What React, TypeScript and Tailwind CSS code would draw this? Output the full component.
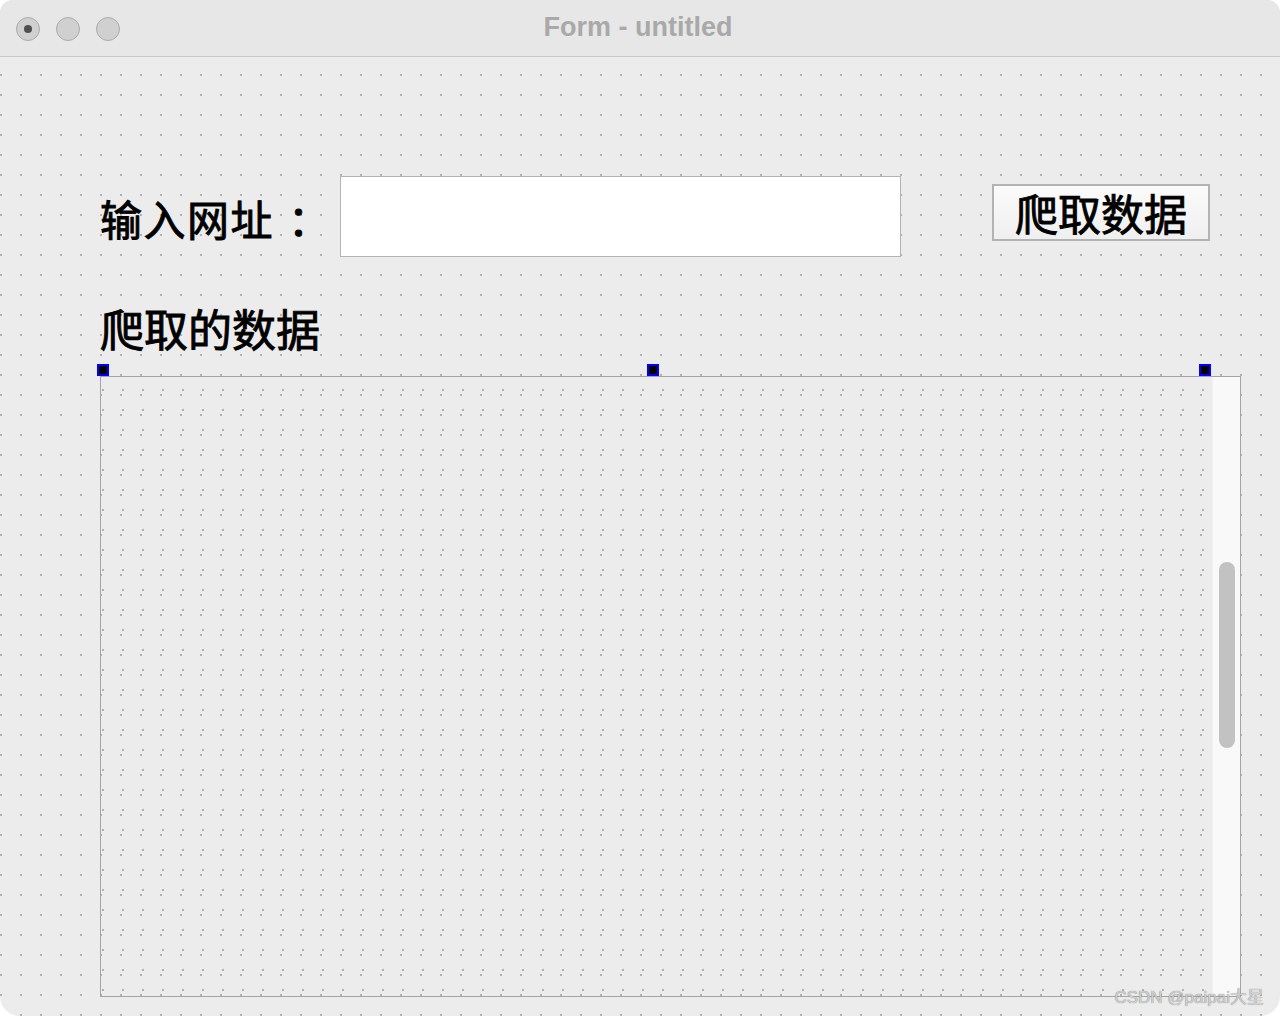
const cjk = "font-['Noto_Sans_CJK_SC','Noto_Sans_CJK_TC',sans-serif] font-normal [-webkit-text-stroke:0.9px_black]";

function Handle() {
  return <div className="h-[12px] w-[12px] border-2 border-[#0000ff] bg-black" />;
}

export default function App() {
  return (
    <div className="h-[1016px] w-[1280px] bg-white">
      <div className="relative flex h-[1016px] w-[1280px] flex-col overflow-hidden rounded-t-[13px] rounded-b-[20px] bg-[#ececec]">
        {/* Title bar */}
        <div className="relative flex h-[57px] shrink-0 items-center border-b border-[#c9c9c9] bg-[#e7e7e7]">
          <div className="flex items-center gap-[16px] pl-[16px] pt-[1px]">
            <div className="flex h-[24px] w-[24px] items-center justify-center rounded-full border border-[#ababab] bg-[#d0d0d0]">
              <div className="h-[8px] w-[8px] rounded-full bg-[#4f4f4f]" />
            </div>
            <div className="h-[24px] w-[24px] rounded-full border border-[#ababab] bg-[#d0d0d0]" />
            <div className="h-[24px] w-[24px] rounded-full border border-[#ababab] bg-[#d0d0d0]" />
          </div>
          <div className="absolute inset-x-0 top-[9px] pr-[4px] text-center font-['Liberation_Sans',Arial,sans-serif] text-[27px] font-bold leading-[36px] text-[#a9a9a9]">
            Form - untitled
          </div>
        </div>

        {/* Form canvas */}
        <div className="flex-1 bg-[radial-gradient(circle,#b1b1b1_0.8px,transparent_1.1px)] bg-[length:20px_20px] bg-[position:-9px_8px]">
          <div className={`flex items-start pl-[100px] pt-[119px] ${cjk}`}>
            <div className="flex h-[81px] w-[240px] items-center pt-[3px] text-[42px] leading-none tracking-[1.5px] text-black">
              输入网址<span className="ml-[14px]">：</span>
            </div>
            <div className="h-[81px] w-[561px] border border-[#b4b4b4] bg-white" />
            <div className="ml-[91px] mt-[8px] flex h-[57px] w-[218px] items-center justify-center border-2 border-[#b3b3b3] bg-gradient-to-b from-[#fbfbfb] to-[#efefef] text-[43px] leading-none text-black">
              爬取数据
            </div>
          </div>

          <div className={`ml-[100px] mt-[45px] h-[52px] text-[44px] leading-[52px] text-black ${cjk}`}>
            爬取的数据
          </div>

          <div className="relative ml-[100px] mt-[22px] flex h-[621px] w-[1141px] border border-[#a4a4a4] bg-[radial-gradient(circle,#b1b1b1_0.8px,transparent_1.1px)] bg-[length:20px_20px] bg-[position:-8px_3px]">
            <div className="absolute left-[-4px] top-[-13px]"><Handle /></div>
            <div className="absolute left-[546px] top-[-13px]"><Handle /></div>
            <div className="absolute left-[1098px] top-[-13px]"><Handle /></div>
            <div className="flex-1" />
            <div className="w-[28px] border-l border-[#f1f1f1] bg-[#f9f9f9] pt-[185px]">
              <div className="ml-[6px] h-[186px] w-[16px] rounded-full bg-[#c2c2c2]" />
            </div>
          </div>
        </div>

        {/* Watermark */}
        <div className="absolute bottom-[8px] right-[16px] font-['Liberation_Sans',Arial,'Noto_Sans_CJK_SC',sans-serif] text-[17px] leading-[20px] text-[#cfcfcf] [text-shadow:0_0_1px_#6f6f6f]">
          CSDN @paipai大星
        </div>
      </div>
    </div>
  );
}
